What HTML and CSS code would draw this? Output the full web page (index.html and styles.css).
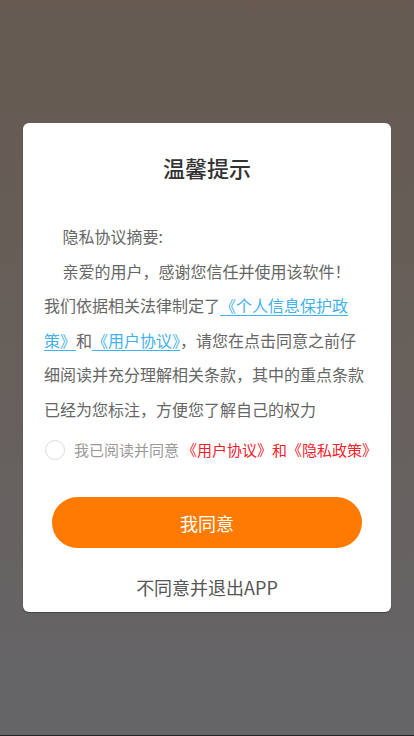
FILE: index.html
```html
<!DOCTYPE html>
<html lang="zh-CN">
<head>
<meta charset="utf-8">
<meta name="viewport" content="width=device-width, initial-scale=1">
<title>温馨提示</title>
<link rel="stylesheet" href="styles.css">
</head>
<body>
<div class="screen">
  <div class="dialog">
    <h1 class="title">温馨提示</h1>
    <div class="content">
      <p class="line indent">隐私协议摘要:</p>
      <p class="line indent">亲爱的用户，感谢您信任并使用该软件！</p>
      <p class="line">我们依据相关法律制定了<a class="link" href="#">《个人信息保护政策》</a>和<a class="link" href="#">《用户协议》</a>，请您在点击同意之前仔细阅读并充分理解相关条款，其中的重点条款已经为您标注，方便您了解自己的权力</p>
    </div>
    <label class="agree">
      <span class="radio"></span>
      <span class="agree-text">我已阅读并同意</span><span class="agree-link">《用户协议》和《隐私政策》</span>
    </label>
    <button class="btn-agree" type="button">我同意</button>
    <div class="exit">不同意并退出APP</div>
  </div>
</div>
</body>
</html>
```
FILE: styles.css
```css
* { box-sizing: border-box; }
html, body { margin: 0; padding: 0; }
body {
  font-family: "Noto Sans CJK SC", "Noto Sans", sans-serif;
}
.screen {
  width: 414px;
  height: 736px;
  padding: 123px 0 0 23px;
  background: linear-gradient(180deg, #665a51 0%, #67605c 55%, #656569 100%);
  border-bottom: 1px solid #242424;
}
.dialog {
  width: 368px;
  background: #fff;
  border-radius: 6px;
  box-shadow: 0 1px 1px rgba(0, 0, 0, 0.35);
  padding: 29px 21px 13px;
  display: flex;
  flex-direction: column;
  align-items: stretch;
}
.title {
  margin: 0;
  font-size: 22px;
  line-height: 30px;
  font-weight: 500;
  color: #333;
  text-align: center;
}
.content {
  margin-top: 37px;
  font-size: 16px;
  line-height: 34.5px;
  color: #666;
}
.line { margin: 0; }
.indent { text-indent: 18.5px; }
.link {
  color: #44b2ea;
  text-decoration: underline;
  text-underline-offset: 3px;
}
.agree {
  margin-top: 14px;
  height: 20px;
  display: flex;
  align-items: center;
  white-space: nowrap;
  font-size: 15px;
  line-height: 20px;
}
.radio {
  width: 20px;
  height: 20px;
  flex: none;
  border: 1px solid #dcdcdc;
  border-radius: 50%;
  margin-left: 1px;
  margin-right: 9px;
}
.agree-text { color: #999; }
.agree-link { color: #f3202c; margin-left: 3px; }
.btn-agree {
  margin: 37px 8px 0 8px;
  height: 51px;
  border: none;
  border-radius: 26px;
  background: #ff7a00;
  color: #fff;
  font-family: inherit;
  font-size: 18px;
  line-height: 24px;
  padding: 0;
}
.exit {
  margin-top: 27px;
  font-size: 18px;
  line-height: 24px;
  color: #555;
  text-align: center;
}
```
